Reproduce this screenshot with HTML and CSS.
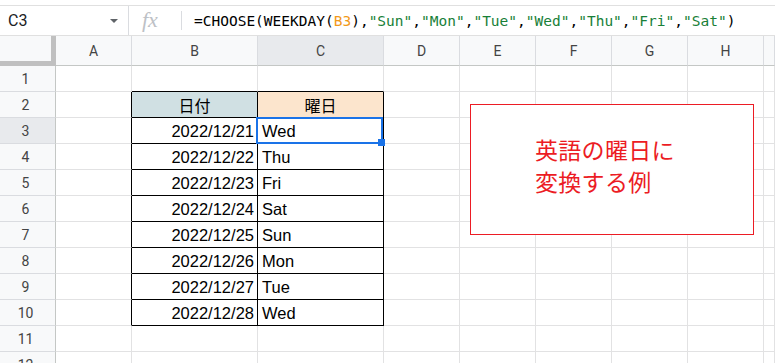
FILE: index.html
```html
<!DOCTYPE html>
<html lang="ja">
<head>
  <meta charset="UTF-8">
  <meta name="viewport" content="width=device-width, initial-scale=1.0">
  <title>WEEKDAY CHOOSE</title>
  <link rel="stylesheet" href="styles.css">
</head>
<body>
  <div class="formula-bar">
    <div class="name-box">
      <span class="cell-ref">C3</span>
      <span class="caret"></span>
    </div>
    <div class="fx">fx</div>
    <div class="formula">=CHOOSE(WEEKDAY(<span class="ref">B3</span>),<span class="str">"Sun"</span>,<span class="str">"Mon"</span>,<span class="str">"Tue"</span>,<span class="str">"Wed"</span>,<span class="str">"Thu"</span>,<span class="str">"Fri"</span>,<span class="str">"Sat"</span>)</div>
  </div>

  <div class="sheet">
    <div class="row heads">
      <div class="corner"></div>
      <div class="col-head">A</div>
      <div class="col-head">B</div>
      <div class="col-head active">C</div>
      <div class="col-head">D</div>
      <div class="col-head">E</div>
      <div class="col-head">F</div>
      <div class="col-head">G</div>
      <div class="col-head">H</div>
      <div class="col-head"></div>
    </div>

    <div class="row">
      <div class="row-head">1</div>
      <div class="cell"></div><div class="cell top"></div><div class="cell top"></div>
      <div class="cell"></div><div class="cell"></div><div class="cell"></div><div class="cell"></div><div class="cell"></div><div class="cell"></div>
    </div>
    <div class="row">
      <div class="row-head">2</div>
      <div class="cell edge"></div>
      <div class="cell tb th date-head">日付</div>
      <div class="cell tb th day-head">曜日</div>
      <div class="cell"></div><div class="cell"></div><div class="cell"></div><div class="cell"></div><div class="cell"></div><div class="cell"></div>
    </div>
    <div class="row">
      <div class="row-head active">3</div>
      <div class="cell edge"></div>
      <div class="cell tb date">2022/12/21</div>
      <div class="cell tb day selected">Wed</div>
      <div class="cell"></div><div class="cell"></div><div class="cell"></div><div class="cell"></div><div class="cell"></div><div class="cell"></div>
    </div>
    <div class="row">
      <div class="row-head">4</div>
      <div class="cell edge"></div>
      <div class="cell tb date">2022/12/22</div>
      <div class="cell tb day">Thu</div>
      <div class="cell"></div><div class="cell"></div><div class="cell"></div><div class="cell"></div><div class="cell"></div><div class="cell"></div>
    </div>
    <div class="row">
      <div class="row-head">5</div>
      <div class="cell edge"></div>
      <div class="cell tb date">2022/12/23</div>
      <div class="cell tb day">Fri</div>
      <div class="cell"></div><div class="cell"></div><div class="cell"></div><div class="cell"></div><div class="cell"></div><div class="cell"></div>
    </div>
    <div class="row">
      <div class="row-head">6</div>
      <div class="cell edge"></div>
      <div class="cell tb date">2022/12/24</div>
      <div class="cell tb day">Sat</div>
      <div class="cell"></div><div class="cell"></div><div class="cell"></div><div class="cell"></div><div class="cell"></div><div class="cell"></div>
    </div>
    <div class="row">
      <div class="row-head">7</div>
      <div class="cell edge"></div>
      <div class="cell tb date">2022/12/25</div>
      <div class="cell tb day">Sun</div>
      <div class="cell"></div><div class="cell"></div><div class="cell"></div><div class="cell"></div><div class="cell"></div><div class="cell"></div>
    </div>
    <div class="row">
      <div class="row-head">8</div>
      <div class="cell edge"></div>
      <div class="cell tb date">2022/12/26</div>
      <div class="cell tb day">Mon</div>
      <div class="cell"></div><div class="cell"></div><div class="cell"></div><div class="cell"></div><div class="cell"></div><div class="cell"></div>
    </div>
    <div class="row">
      <div class="row-head">9</div>
      <div class="cell edge"></div>
      <div class="cell tb date">2022/12/27</div>
      <div class="cell tb day">Tue</div>
      <div class="cell"></div><div class="cell"></div><div class="cell"></div><div class="cell"></div><div class="cell"></div><div class="cell"></div>
    </div>
    <div class="row">
      <div class="row-head">10</div>
      <div class="cell edge"></div>
      <div class="cell tb date">2022/12/28</div>
      <div class="cell tb day">Wed</div>
      <div class="cell"></div><div class="cell"></div><div class="cell"></div><div class="cell"></div><div class="cell"></div><div class="cell"></div>
    </div>
    <div class="row">
      <div class="row-head">11</div>
      <div class="cell"></div><div class="cell"></div><div class="cell"></div>
      <div class="cell"></div><div class="cell"></div><div class="cell"></div><div class="cell"></div><div class="cell"></div><div class="cell"></div>
    </div>
    <div class="row">
      <div class="row-head">12</div>
      <div class="cell"></div><div class="cell"></div><div class="cell"></div>
      <div class="cell"></div><div class="cell"></div><div class="cell"></div><div class="cell"></div><div class="cell"></div><div class="cell"></div>
    </div>

    <!-- text box drawn over the grid -->
    <div class="note">英語の曜日に<br>変換する例</div>
  </div>
</body>
</html>
```

FILE: styles.css
```css
:root {
  --grid: #e2e2e3;
  --head-bg: #f8f9fa;
  --head-line: #c4c7c5;
  --head-active: #e8eaed;
  --select: #1a73e8;
  --red: #ec1c24;
}

* {
  box-sizing: border-box;
  margin: 0;
  padding: 0;
}

body {
  font-family: 'Liberation Sans', Arial, 'Noto Sans CJK JP', sans-serif;
  background: #fff;
  color: #000;
  overflow: hidden;
}

/* formula bar */
.formula-bar {
  display: flex;
  align-items: center;
  height: 31px;
  margin-top: 5px;
  border-top: 1px solid #e0e0e0;
  border-bottom: 1px solid #e0e0e0;
}

.name-box {
  display: flex;
  align-items: center;
  width: 129px;
  height: 100%;
  padding: 0 10px 0 8px;
  border-right: 1px solid #dadce0;
}

.cell-ref {
  flex: 1;
  font-family: Roboto, 'Liberation Sans', sans-serif;
  font-size: 16px;
  color: #202124;
}

.caret {
  width: 0;
  height: 0;
  border-left: 4px solid transparent;
  border-right: 4px solid transparent;
  border-top: 4px solid #5f6368;
}

.fx {
  width: 53px;
  height: 19px;
  padding-left: 13px;
  border-right: 1px solid #dadce0;
  font-family: 'Liberation Serif', serif;
  font-style: italic;
  font-size: 22px;
  line-height: 17px;
  color: #bdc1c6;
}

.formula {
  padding-left: 12px;
  font-family: 'DejaVu Sans Mono', 'Liberation Mono', monospace;
  font-size: 14.5px;
  white-space: nowrap;
  color: #000;
}

.formula .ref {
  color: #f29a19;
}

.formula .str {
  color: #188038;
}

/* sheet grid */
.sheet {
  position: relative;
}

.row {
  display: grid;
  grid-template-columns: 56px 76px 126px 126px 76px 76px 76px 76px 76px 1fr;
  height: 26px;
}

.row.heads {
  height: 30px;
}

.corner {
  background: var(--head-bg);
  border-right: 5px solid #c0c0c0;
  border-bottom: 5px solid #c0c0c0;
}

.col-head,
.row-head {
  display: flex;
  align-items: center;
  justify-content: center;
  background: var(--head-bg);
  font-family: Roboto, 'Liberation Sans', sans-serif;
  font-size: 14px;
  color: #444;
}

.col-head {
  border-right: 1px solid #dadce0;
  border-bottom: 1px solid var(--head-line);
}

.row-head {
  padding-right: 4px;
  border-right: 1px solid var(--head-line);
  border-bottom: 1px solid #dadce0;
}

.col-head.active,
.row-head.active {
  background: var(--head-active);
}

.cell {
  display: flex;
  align-items: center;
  padding-top: 1px;
  border-right: 1px solid var(--grid);
  border-bottom: 1px solid var(--grid);
  font-size: 16.5px;
  white-space: nowrap;
}

.cell.top {
  border-bottom-color: #000;
}

.cell.edge {
  border-right-color: #000;
}

.cell.tb {
  border-right-color: #000;
  border-bottom-color: #000;
}

.cell.th {
  justify-content: center;
  padding-top: 0;
  font-family: 'Noto Sans CJK JP', sans-serif;
  font-size: 16px;
}

.date-head {
  background: #d0e0e3;
}

.day-head {
  background: #fce5cd;
}

.cell.date {
  justify-content: flex-end;
  padding-right: 3px;
}

.cell.day {
  padding-left: 4px;
}

.cell.selected {
  position: relative;
}

.cell.selected::after {
  content: '';
  position: absolute;
  top: -1px;
  left: -2px;
  right: 0;
  bottom: -1px;
  border: 2px solid var(--select);
}

.cell.selected::before {
  content: '';
  position: absolute;
  right: -2px;
  bottom: -3px;
  width: 7px;
  height: 7px;
  background: var(--select);
  z-index: 1;
}

/* floating text box */
.note {
  position: absolute;
  top: 68px;
  left: 470px;
  width: 284px;
  height: 131px;
  padding: 28px 0 0 64px;
  border: 1px solid var(--red);
  background: #fff;
  font-family: 'Noto Sans CJK JP', sans-serif;
  font-size: 23px;
  line-height: 32px;
  letter-spacing: 0.3px;
  color: var(--red);
}
```
